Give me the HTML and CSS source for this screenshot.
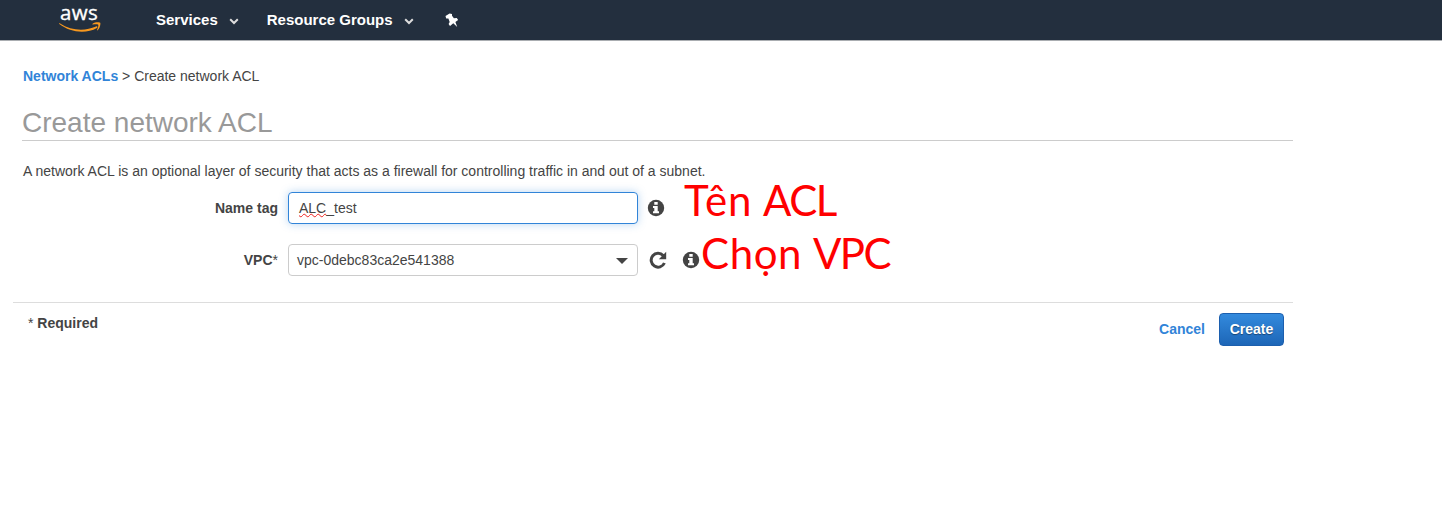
FILE: index.html
```html
<!DOCTYPE html>
<html lang="en">
<head>
<meta charset="utf-8">
<title>Create network ACL</title>
<link rel="stylesheet" href="styles.css">
</head>
<body>
<header class="topbar">
  <a class="logo">
    <span class="logo-text">aws</span>
    <svg class="logo-smile" viewBox="0 0 42 11" width="42" height="11"><path d="M.7 1.200c12 7.800 25.500 8 36.300 3.300 1.300-.6 2 .6.900 1.400C27.500 12 11.500 10.800.3 2.100-.2 1.600.1.900.7 1.200Z"/><path d="M33.600 1.700C35.800 0 40.500-.1 41.200.8c.7 1-.4 5.900-2.600 7.500-.4.300-.8.100-.6-.4.700-1.600 1.700-4.400 1.200-5.100-.5-.6-3.500-.5-5.200-.2-.6.100-.8-.5-.4-.9Z"/></svg>
  </a>
  <nav class="menu">
    <a class="menu-item">Services<svg class="chevron" width="10" height="7" viewBox="0 0 10 7"><path d="M1.200 1.300 5 5l3.800-3.700"/></svg></a>
    <a class="menu-item">Resource Groups<svg class="chevron" width="10" height="7" viewBox="0 0 10 7"><path d="M1.200 1.300 5 5l3.800-3.700"/></svg></a>
    <svg class="pin" width="14" height="15" viewBox="0 0 14 15"><path d="M4.600.4 7 1.100 7 2.700l1.900 2.600 2.900-.3 1.300 2-2.700 1.900 1.800 5.100-3.900-3.700-3.300 2.600-1.400-2L4.700 9 3.400 5.600l-2.200-.2L.5 3Z"/></svg>
  </nav>
</header>
<main class="page">
  <div class="breadcrumb"><a class="link">Network ACLs</a> &gt; Create network ACL</div>
  <h1 class="title">Create network ACL</h1>
  <p class="intro">A network ACL is an optional layer of security that acts as a firewall for controlling traffic in and out of a subnet.</p>
  <div class="row">
    <label class="label">Name tag</label>
    <div class="field focused"><span class="misspelled">ALC</span>_test</div>
    <svg class="info" width="16" height="16" viewBox="0 0 16 16"><circle cx="8" cy="8" r="8.200"/><path d="M6.300 2h3.400v2.800H6.300ZM5 6.100h4.700v5.200H11v2H5v-2h1.300V8.100H5Z"/></svg>
    <span class="note note-name"><span class="wide">Tên</span> <span class="tight">ACL</span></span>
  </div>
  <div class="row">
    <label class="label">VPC<span class="star">*</span></label>
    <div class="field select">vpc-0debc83ca2e541388<i class="caret"></i></div>
    <svg class="refresh" width="18" height="18" viewBox="0 0 18 18"><path class="arc" d="M14.200 4.600A6.900 6.900 0 1 0 15.400 12"/><path class="tip" d="M17.200.8v7.400H9.800Z"/></svg>
    <svg class="info info-vpc" width="16" height="16" viewBox="0 0 16 16"><circle cx="8" cy="8" r="8.200"/><path d="M6.300 2h3.400v2.800H6.300ZM5 6.100h4.700v5.200H11v2H5v-2h1.300V8.100H5Z"/></svg>
    <span class="note note-vpc"><span class="wide">Chọn</span> <span class="tight">VPC</span></span>
  </div>
  <footer class="footer">
    <div class="required"><span class="star">*</span> Required</div>
    <div class="actions"><a class="link">Cancel</a><button class="create">Create</button></div>
  </footer>
</main>
</body>
</html>
```
FILE: styles.css
```css
* { box-sizing: border-box; }
body {
  margin: 0;
  background: #fff;
  color: #444;
  font: 14px/20px "Liberation Sans", Arial, sans-serif;
}
.topbar {
  display: flex;
  height: 41px;
  padding-left: 58px;
  background: #232f3e;
  border-bottom: 1px solid #aaadb1;
}
.logo { width: 98px; display: flex; flex-direction: column; padding: 3px 0 0 1px; }
.logo-text {
  height: 19px;
  padding-left: 1px;
  color: #fff;
  font: 500 20.5px/19px "Open Sans", "Noto Sans", sans-serif;
  letter-spacing: .3px;
  -webkit-text-stroke: .35px #fff;
}
.logo-smile { fill: #f7981f; }
.menu { display: flex; align-items: center; height: 40px; }
.menu-item { display: flex; align-items: center; color: #fff; font-size: 15px; font-weight: bold; margin-right: 28px; }
.chevron { margin: 3px 0 0 11px; fill: none; stroke: #ddd; stroke-width: 2; }
.pin { fill: #fff; margin-left: 3px; }
.page { width: 1293px; padding: 25px 0 0 13px; }
.breadcrumb { padding-left: 10px; }
.link { color: #3184d8; font-weight: bold; }
.title {
  height: 39px;
  margin: 16px 0 0 9px;
  padding-top: 5px;
  border-bottom: 1px solid #ccc;
  color: #999;
  font-size: 28px;
  font-weight: normal;
  line-height: 32px;
}
.intro { margin: 20px 0 11px 10px; }
.row { position: relative; display: flex; align-items: center; height: 32px; margin-bottom: 20px; }
.label { width: 265px; margin-right: 10px; text-align: right; font-weight: bold; }
.star { font-weight: normal; }
.field {
  width: 350px;
  height: 32px;
  padding: 0 10px;
  border: 1px solid #ccc;
  border-radius: 4px;
  line-height: 31px;
}
.focused { border-color: #3184d8; box-shadow: 0 0 8px rgba(49, 132, 216, .35); }
.misspelled { text-decoration: underline wavy #e22 1px; text-decoration-skip-ink: none; text-underline-offset: 0; }
.select { display: flex; align-items: center; justify-content: space-between; padding: 0 8px; }
.caret { border: 6px solid transparent; border-top-color: #444; border-bottom: 0; margin: 2px 1px 0 0; }
.info { margin-left: 10px; fill: #444; overflow: visible; }
.info path { fill: #fff; }
.info-vpc { margin-left: 16px; }
.refresh { margin-left: 11px; }
.arc { fill: none; stroke: #444; stroke-width: 3; }
.tip { fill: #444; }
.note {
  position: absolute;
  color: #f00;
  font: 42px/50px Lato, "Noto Sans", sans-serif;
  white-space: nowrap;
}
.wide { letter-spacing: .8px; }
.tight { letter-spacing: -1.5px; }
.note-name { left: 671px; top: -17px; }
.note-vpc { left: 688px; top: -16px; }
.note-vpc .wide { letter-spacing: .6px; }
.footer {
  display: flex;
  justify-content: space-between;
  margin-top: 26px;
  padding: 10px 9px 0 15px;
  border-top: 1px solid #ddd;
}
.required { font-weight: bold; }
.actions { display: flex; align-items: center; gap: 14px; }
.actions .link { margin-top: -2px; }
.create {
  width: 65px;
  height: 33px;
  padding: 0 0 2px;
  border: 1px solid #1c5fae;
  border-radius: 4px;
  background: linear-gradient(#338add, #1d66b7);
  color: #fff;
  font: bold 14px "Liberation Sans", Arial, sans-serif;
  text-shadow: 0 1px 1px rgba(0, 0, 0, .4);
}
```
